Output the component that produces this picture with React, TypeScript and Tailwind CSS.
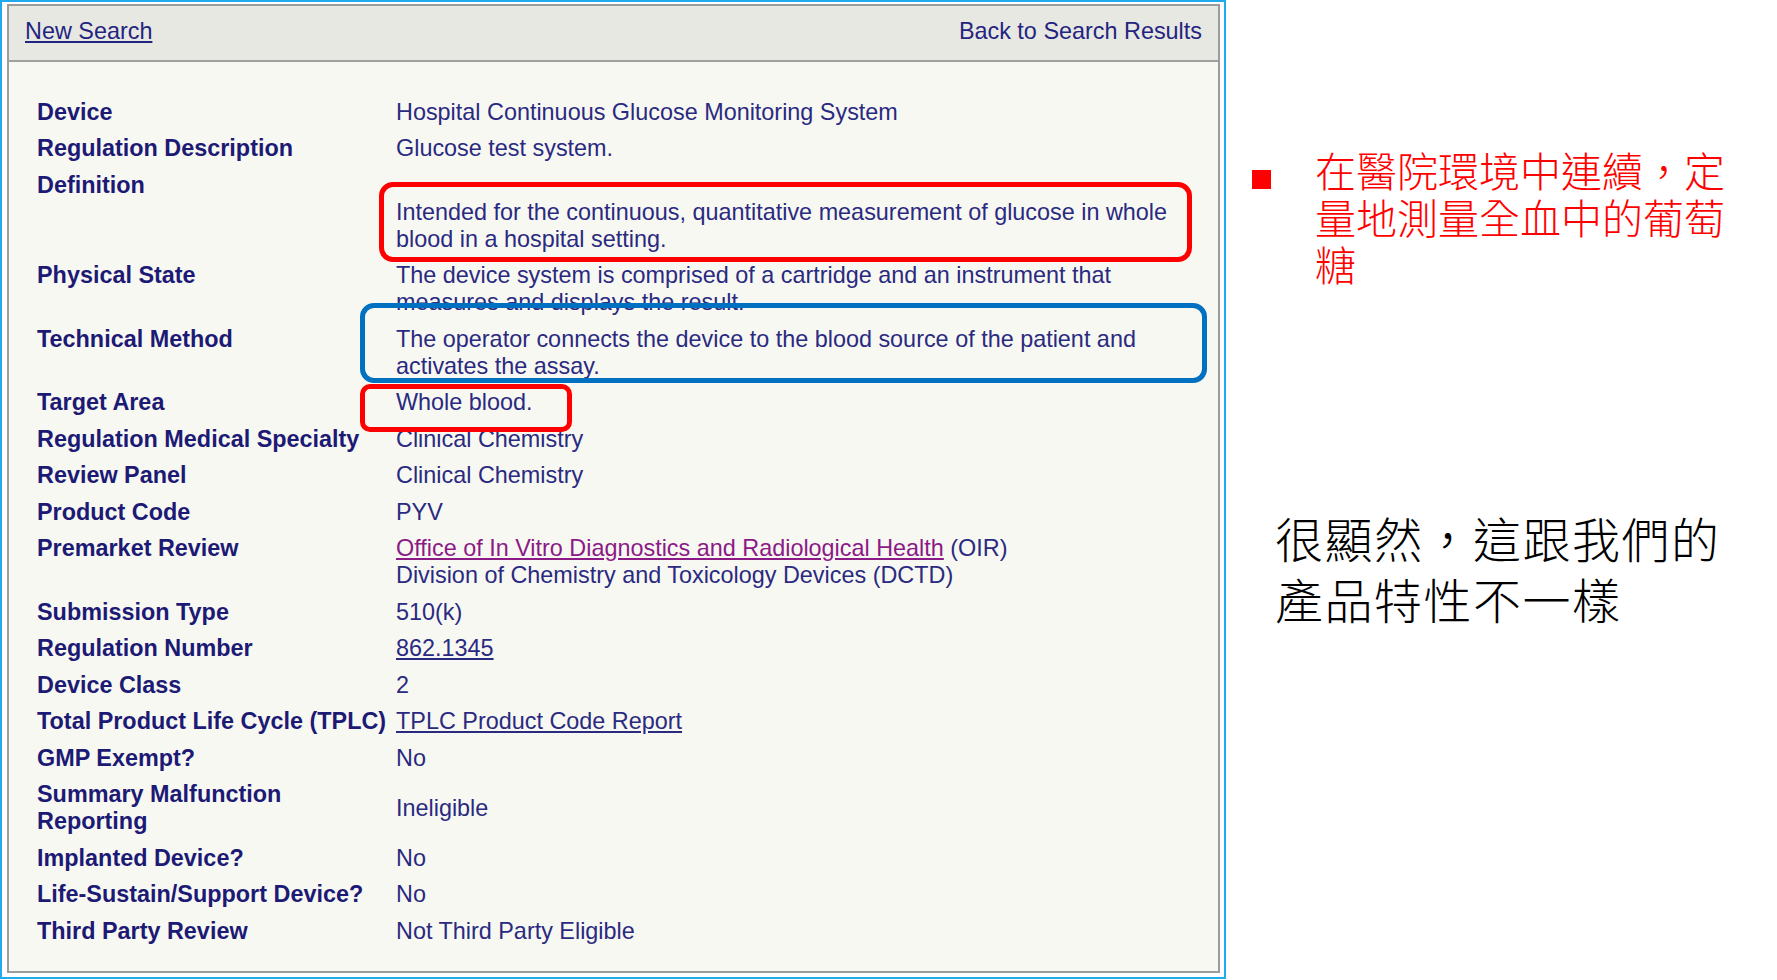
const rows: { label: React.ReactNode; value: React.ReactNode; center?: boolean }[] = [
  { label: 'Device', value: 'Hospital Continuous Glucose Monitoring System' },
  { label: 'Regulation Description', value: 'Glucose test system.' },
  {
    label: 'Definition',
    value: (
      <>
        <br />
        Intended for the continuous, quantitative measurement of glucose in whole
        <br />
        blood in a hospital setting.
      </>
    ),
  },
  {
    label: 'Physical State',
    value: (
      <>
        The device system is comprised of a cartridge and an instrument that
        <br />
        measures and displays the result.
      </>
    ),
  },
  {
    label: 'Technical Method',
    value: (
      <>
        The operator connects the device to the blood source of the patient and
        <br />
        activates the assay.
      </>
    ),
  },
  { label: 'Target Area', value: 'Whole blood.' },
  { label: 'Regulation Medical Specialty', value: 'Clinical Chemistry' },
  { label: 'Review Panel', value: 'Clinical Chemistry' },
  { label: 'Product Code', value: 'PYV' },
  {
    label: 'Premarket Review',
    value: (
      <>
        <a className="underline text-[#8b1a86]">Office of In Vitro Diagnostics and Radiological Health</a> (OIR)
        <br />
        Division of Chemistry and Toxicology Devices (DCTD)
      </>
    ),
  },
  { label: 'Submission Type', value: '510(k)' },
  { label: 'Regulation Number', value: <a className="underline">862.1345</a> },
  { label: 'Device Class', value: '2' },
  { label: 'Total Product Life Cycle (TPLC)', value: <a className="underline">TPLC Product Code Report</a> },
  { label: 'GMP Exempt?', value: 'No' },
  {
    label: (
      <>
        Summary Malfunction
        <br />
        Reporting
      </>
    ),
    value: 'Ineligible',
    center: true,
  },
  { label: 'Implanted Device?', value: 'No' },
  { label: 'Life-Sustain/Support Device?', value: 'No' },
  { label: 'Third Party Review', value: 'Not Third Party Eligible' },
];

export default function App() {
  return (
    <div className="w-[1777px] h-[980px] bg-white flex overflow-hidden">
      {/* Screenshot panel */}
      <div className="relative w-[1226px] h-[979px] shrink-0 border-2 border-[#22aaee] pl-[5px] pt-[2px] pr-[4px] pb-[4px] bg-white font-['Liberation_Sans',Arial,sans-serif]">
        <div className="h-full border-2 border-[#9c9c9c] bg-[#f8f8f3] flex flex-col">
          <div className="h-[56px] shrink-0 flex items-center justify-between px-4 pb-[2px] bg-[#e8e8e3] border-b-2 border-[#a0a0a0] text-[23.4px] text-[#242480]">
            <a className="underline">New Search</a>
            <a>Back to Search Results</a>
          </div>

          <div className="flex flex-col gap-[9.5px] pt-[36.5px] pl-[28px] text-[23.4px] leading-[27px]">
            {rows.map((r, i) => (
              <div key={i} className={`flex ${r.center ? 'items-center' : 'items-start'}`}>
                <div className="w-[359px] shrink-0 font-bold text-[#1c1a74]">{r.label}</div>
                <div className="text-[#2a2a80]">{r.value}</div>
              </div>
            ))}
          </div>
        </div>

        {/* Annotation boxes */}
        <div className="absolute left-[377px] top-[180px] w-[813px] h-[80px] border-[5px] border-[#ff0000] rounded-[14px]" />
        <div className="absolute left-[358px] top-[301px] w-[847px] h-[80px] border-[5px] border-[#0070c0] rounded-[14px]" />
        <div className="absolute left-[358px] top-[382px] w-[212px] h-[48px] border-[5px] border-[#ff0000] rounded-[10px]" />
      </div>

      {/* Notes */}
      <div className="flex flex-col pl-[26px] font-['Noto_Sans_CJK_TC','Noto_Sans_CJK_SC',sans-serif] font-light">
        <div className="flex items-start mt-[146px]">
          <div className="w-[19px] h-[19px] bg-[#ff0000] mt-[24px] shrink-0" />
          <p className="ml-[44px] text-[41px] leading-[47px] text-[#ff0000] whitespace-nowrap">
            在醫院環境中連續，定
            <br />
            量地測量全血中的葡萄
            <br />
            糖
          </p>
        </div>
        <p className="ml-[23px] mt-[220px] text-[48px] leading-[61px] text-black whitespace-nowrap tracking-[1.5px]">
          很顯然，這跟我們的
          <br />
          產品特性不一樣
        </p>
      </div>
    </div>
  );
}
